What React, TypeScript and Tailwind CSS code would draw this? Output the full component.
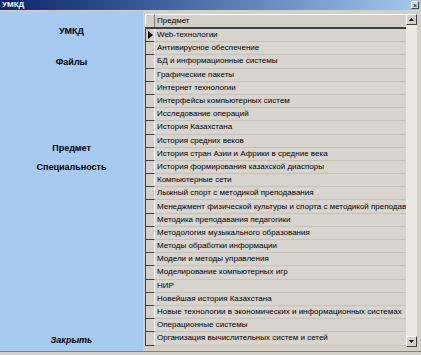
import React from "react";

const rows = [
  "Web-технологии",
  "Антивирусное обеспечение",
  "БД и информационные системы",
  "Графические пакеты",
  "Интернет технологии",
  "Интерфейсы компьютерных систем",
  "Исследование операций",
  "История Казахстана",
  "История средних веков",
  "История стран Азии и Африки в средние века",
  "История формирования казахской диаспоры",
  "Компьютерные сети",
  "Лыжный спорт с методикой преподавания",
  "Менеджмент физической культуры и спорта с методикой преподавания",
  "Методика преподавания педагогики",
  "Методология музыкального образования",
  "Методы обработки информации",
  "Модели и методы управления",
  "Моделирование компьютерных игр",
  "НИР",
  "Новейшая история Казахстана",
  "Новые технологии в экономических и информационных системах",
  "Операционные системы",
  "Организация вычислительных систем и сетей",
];

export default function App() {
  return (
    <div
      className="w-[421px] h-[355px] flex flex-col overflow-hidden bg-[#d4d0c8]"
      style={{ fontFamily: '"Liberation Sans", Arial, sans-serif' }}
    >
      {/* Title bar */}
      <div className="h-[10px] flex items-center justify-between bg-gradient-to-r from-[#0a246a] to-[#a6caf0] pl-[2px] pr-[2px]">
        <span className="text-white font-bold text-[8px] leading-none">УМКД</span>
        <div className="w-[8px] h-[8px] bg-[#d4d0c8] border border-t-white border-l-white border-r-[#404040] border-b-[#404040] flex items-center justify-center text-[7px] leading-none text-black">
          ×
        </div>
      </div>
      <div className="h-[1px] bg-[#d4d0c8]" />
      {/* Body */}
      <div className="flex-1 flex min-h-0">
        {/* Left panel */}
        <div className="w-[143px] shrink-0 bg-[#a6caf0] flex flex-col items-center text-[9px] font-bold text-black leading-[12px]">
          <div className="mt-[14px]">УМКД</div>
          <div className="mt-[19px]">Файлы</div>
          <div className="mt-[74px]">Предмет</div>
          <div className="mt-[7px]">Специальность</div>
          <div className="mt-auto mb-[5px] italic">Закрыть</div>
        </div>
        {/* Grid */}
        <div className="flex-1 min-w-0 flex flex-col bg-[#d4d0c8] pt-[3px] pl-[2px] pr-[4px]">
          <div className="flex flex-1 min-h-0">
            <div className="flex-1 flex flex-col min-w-0">
              {/* Header */}
              <div className="flex h-[15px] border-b-2 border-[#404040]">
                <div className="w-[10px] border-l border-t border-white border-r border-r-[#808080] bg-[#d4d0c8]" />
                <div className="flex-1 flex items-center pl-[2px] text-[8px] text-black border-t border-white">
                  Предмет
                </div>
              </div>
              {rows.map((r, i) => (
                <div key={i} className="flex h-[13.2px]">
                  <div className="w-[10px] shrink-0 border-l border-l-[#404040] border-b border-b-[#404040] border-r border-r-white bg-[#d4d0c8] flex items-center justify-center">
                    {i === 0 && (
                      <svg width="5" height="8" viewBox="0 0 5 8">
                        <path d="M0 0 L5 4 L0 8 Z" fill="#000" />
                      </svg>
                    )}
                  </div>
                  <div className="flex-1 min-w-0 flex items-center pl-[2px] text-[8px] text-black whitespace-nowrap overflow-hidden border-b border-[#c6c2ba] bg-[#d8d5ce]">
                    {r}
                  </div>
                </div>
              ))}
              <div className="flex-1" />
            </div>
            {/* Scrollbar */}
            <div className="w-[11px] shrink-0 flex flex-col bg-[#ebe9e4] mb-[4px]">
              <div className="h-[11px] bg-[#d4d0c8] border border-t-white border-l-white border-r-[#404040] border-b-[#404040] flex items-center justify-center">
                <svg width="5" height="3" viewBox="0 0 5 3">
                  <path d="M0 3 L2.5 0 L5 3 Z" fill="#000" />
                </svg>
              </div>
              <div className="flex-1" />
              <div className="h-[11px] bg-[#d4d0c8] border border-t-white border-l-white border-r-[#404040] border-b-[#404040] flex items-center justify-center">
                <svg width="5" height="3" viewBox="0 0 5 3">
                  <path d="M0 0 L2.5 3 L5 0 Z" fill="#000" />
                </svg>
              </div>
            </div>
          </div>
        </div>
      </div>
      <div className="h-[4px] bg-[#d4d0c8] border-t border-[#808080]" />
    </div>
  );
}
